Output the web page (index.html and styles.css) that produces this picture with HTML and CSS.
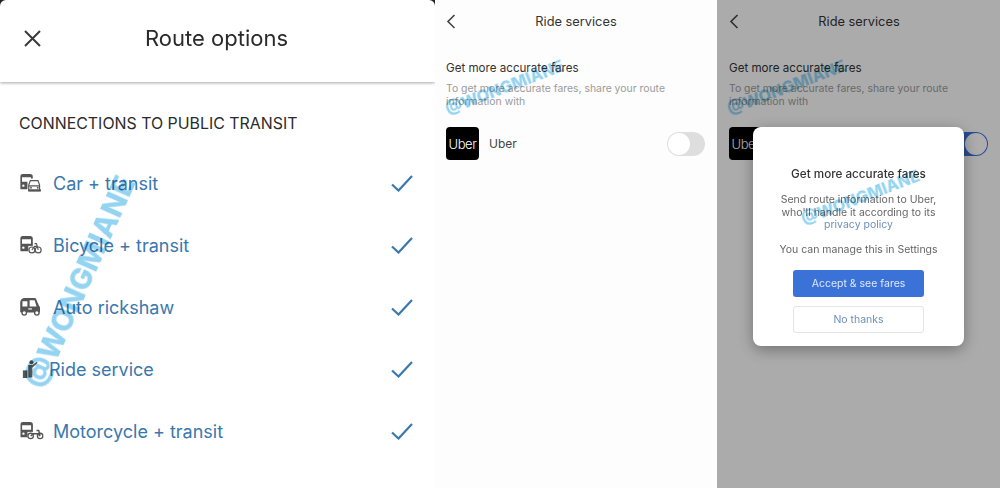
FILE: index.html
```html
<!DOCTYPE html>
<html lang="en">
<head>
	<meta charset="utf-8">
	<title>Route options</title>
	<link rel="stylesheet" href="styles.css">
</head>
<body>
	<svg class="sprite" width="0" height="0">
		<symbol id="bus" viewBox="0 0 24 20">
			<path fill="#555" d="M3 0h8a3 3 0 0 1 3 3v13a1 1 0 0 1-1 1H1a1 1 0 0 1-1-1V3a3 3 0 0 1 3-3z"/>
			<path fill="#fff" d="M2 3.500h10v5H2z"/>
			<circle fill="#fff" cx="3.500" cy="13" r="1.300"/>
		</symbol>
		<symbol id="check" viewBox="0 0 22 17">
			<path fill="none" stroke="#3a78ad" stroke-width="2.200" d="M1 9.500l6.500 6L21 1"/>
		</symbol>
	</svg>

	<main class="shots">
		<section class="route-panel">
			<div class="route-sheet">
				<header class="route-head">
					<svg class="close" viewBox="0 0 17 17"><path fill="none" stroke="#3a3a3a" stroke-width="2" d="M1 1l15 15M16 1L1 16"/></svg>
					<h1>Route options</h1>
				</header>
				<h2>CONNECTIONS TO PUBLIC TRANSIT</h2>
				<ul class="options">
					<li>
						<svg class="mode" viewBox="0 0 24 20">
							<use href="#bus" width="24" height="20"/>
							<path fill="#fff" d="M8 5h16v15H8z"/>
							<path fill="#fff" stroke="#555" stroke-width="1.300" d="M9.500 18.500v-6.500l1.800-4.700h8.400l1.800 4.700v6.500z"/>
							<path fill="#555" d="M9.500 12.500h12.500v1.300H9.500zM9 17h14v2.500H9z"/>
							<circle fill="#555" cx="12" cy="15.300" r="1"/>
							<circle fill="#555" cx="19.500" cy="15.300" r="1"/>
						</svg>
						<span>Car + transit</span>
						<svg class="tick"><use href="#check"/></svg>
					</li>
					<li>
						<svg class="mode" viewBox="0 0 24 20">
							<use href="#bus" width="24" height="20"/>
							<path fill="#fff" d="M9 11h15v9H9z"/>
							<circle fill="#fff" stroke="#555" stroke-width="1.300" cx="13" cy="15.500" r="3.300"/>
							<circle fill="#fff" stroke="#555" stroke-width="1.300" cx="20" cy="15.500" r="3.300"/>
							<path fill="none" stroke="#555" stroke-width="1.200" d="M13 15.500l3-4h3l1 4M16 8.500h2l1 3"/>
						</svg>
						<span>Bicycle + transit</span>
						<svg class="tick"><use href="#check"/></svg>
					</li>
					<li>
						<svg class="mode" viewBox="0 0 24 20">
							<path fill="#555" d="M5 0h11a2 2 0 0 1 2 2l3 7a2 2 0 0 1 1 2v4a1 1 0 0 1-1 1H1a1 1 0 0 1-1-1V5a5 5 0 0 1 5-5z"/>
							<path fill="#fff" d="M2.500 3.500h5.500v6H2.500zM10.500 2.500h5.500l2.200 7h-7.700z"/>
							<path fill="#fff" d="M9 11.500h4v1.300H9z"/>
							<circle fill="#fff" stroke="#555" stroke-width="1.500" cx="4.500" cy="16.500" r="2.500"/>
							<circle fill="#fff" stroke="#555" stroke-width="1.500" cx="18.500" cy="16.500" r="2.500"/>
						</svg>
						<span>Auto rickshaw</span>
						<svg class="tick"><use href="#check"/></svg>
					</li>
					<li class="short">
						<svg class="mode" viewBox="0 0 24 20">
							<circle fill="#555" cx="12.500" cy="2.500" r="2.300"/>
							<path fill="#555" d="M9 5.500h4.500l5-3.500 .8 1-5.800 5.500v11H9z"/>
							<path fill="#555" d="M3 11.500h5v8.500H3z"/>
						</svg>
						<span>Ride service</span>
						<svg class="tick"><use href="#check"/></svg>
					</li>
					<li>
						<svg class="mode wide" viewBox="0 0 26 20">
							<use href="#bus" width="24" height="20"/>
							<path fill="#fff" d="M8 11h18v9H8z"/>
							<circle fill="#fff" stroke="#555" stroke-width="1.400" cx="11.500" cy="15.500" r="3"/>
							<circle fill="#fff" stroke="#555" stroke-width="1.400" cx="22" cy="15.500" r="3"/>
							<path fill="none" stroke="#555" stroke-width="1.600" d="M11.500 15.500l3-2.500h5l2.500 2.500M18 9.500h2.500l1.500 6"/>
						</svg>
						<span>Motorcycle + transit</span>
						<svg class="tick"><use href="#check"/></svg>
					</li>
				</ul>
			</div>
			<div class="mark mark-big">@WONGMIANE</div>
		</section>

		<section class="ride-panel">
			<header class="ride-head">
				<svg class="back" viewBox="0 0 10 15"><path fill="none" stroke="#444" stroke-width="1.600" d="M8.500 1L2 7.500 8.500 14"/></svg>
				<h1>Ride services</h1>
			</header>
			<h2>Get more accurate fares</h2>
			<p class="hint">To get more accurate fares, share your route information with</p>
			<div class="service">
				<div class="uber">Uber</div>
				<span class="service-name">Uber</span>
				<div class="toggle"></div>
			</div>
			<div class="mark mark-small">@WONGMIANE</div>
		</section>

		<section class="ride-panel dimmed">
			<header class="ride-head">
				<svg class="back" viewBox="0 0 10 15"><path fill="none" stroke="#444" stroke-width="1.600" d="M8.500 1L2 7.500 8.500 14"/></svg>
				<h1>Ride services</h1>
			</header>
			<h2>Get more accurate fares</h2>
			<p class="hint">To get more accurate fares, share your route information with</p>
			<div class="service">
				<div class="uber">Uber</div>
				<span class="service-name">Uber</span>
				<div class="toggle on"></div>
			</div>
			<div class="mark mark-small">@WONGMIANE</div>
			<div class="overlay">
				<div class="dialog">
					<h3>Get more accurate fares</h3>
					<p>Send route information to Uber, who'll handle it according to its <a href="#">privacy policy</a></p>
					<p>You can manage this in Settings</p>
					<button class="accept">Accept &amp; see fares</button>
					<button class="decline">No thanks</button>
					<div class="mark mark-dialog">@WONGMIANE</div>
				</div>
			</div>
		</section>
	</main>
</body>
</html>
```

FILE: styles.css
```css
*
{
	box-sizing: border-box;
}
html, body
{
	margin: 0;
	height: 100%;
	overflow: hidden;
}
body
{
	font-family: Inter, Roboto, sans-serif;
	background: #fff;
}
h1, h2, h3, p, ul
{
	margin: 0;
	padding: 0;
	font-weight: 400;
}
.sprite
{
	display: block;
	position: absolute;
}
.shots
{
	display: flex;
	height: 488px;
	filter: blur(.35px);
}

/* left shot */
.route-panel
{
	position: relative;
	width: 435px;
	background: #222;
}
.route-sheet
{
	height: 100%;
	background: #fff;
	border-radius: 6px 6px 0 0;
}
.route-head
{
	display: flex;
	align-items: center;
	justify-content: center;
	position: relative;
	height: 82px;
	padding: 0 2px 6px 0;
	box-shadow: 0 1px 3px rgba(0, 0, 0, .35);
}
.route-head h1
{
	font-size: 22px;
	color: #2a2a2a;
}
.close
{
	position: absolute;
	left: 24px;
	top: 30px;
	width: 17px;
	height: 17px;
}
.route-sheet h2
{
	margin: 32px 0 0 19px;
	font-size: 15.900px;
	line-height: 19px;
	color: #2b2b2b;
}
.options
{
	list-style: none;
	margin-top: 19px;
	padding: 0 22px 0 20px;
}
.options li
{
	display: flex;
	align-items: center;
	height: 62px;
	font-size: 18px;
	color: #3a78ad;
}
.options li span
{
	flex: 1;
	margin-left: 11px;
}
.options li.short span
{
	margin-left: 7px;
}
.mode
{
	width: 22px;
	height: 18px;
}
.mode.wide
{
	width: 24px;
	margin: 0 -2px 0 0;
}
.tick
{
	width: 22px;
	height: 17px;
}

/* middle and right shots */
.ride-panel
{
	position: relative;
	width: 282px;
	padding: 0 11px;
	background: #fdfdfd;
}
.ride-panel.dimmed
{
	width: 283px;
	padding-left: 12px;
}
.ride-head
{
	display: flex;
	align-items: center;
	justify-content: center;
	position: relative;
	height: 42px;
}
.ride-head h1
{
	font-size: 12.800px;
	color: #333;
}
.back
{
	position: absolute;
	left: 0;
	top: 14px;
	width: 10px;
	height: 15px;
}
.ride-panel h2
{
	margin-top: 18px;
	font-size: 11.600px;
	line-height: 16px;
	color: #333;
}
.hint
{
	margin-top: 6px;
	width: 240px;
	font-size: 10.400px;
	line-height: 13px;
	color: #9b9b9b;
}
.service
{
	display: flex;
	align-items: center;
	margin-top: 19px;
}
.uber
{
	display: flex;
	align-items: center;
	justify-content: center;
	width: 33px;
	height: 33px;
	background: #000;
	border-radius: 4px;
	font-size: 13px;
	font-weight: 300;
	letter-spacing: -.4px;
	color: #fff;
}
.service-name
{
	flex: 1;
	margin-left: 10px;
	font-size: 12px;
	color: #444;
}
.toggle
{
	position: relative;
	width: 38px;
	height: 24px;
	margin-right: 1px;
	background: #dedede;
	border-radius: 12px;
}
.toggle:after
{
	content: "";
	position: absolute;
	left: 1px;
	top: 1px;
	width: 22px;
	height: 22px;
	background: #fff;
	border-radius: 50%;
}
.toggle.on
{
	background: #3a72d8;
}
.toggle.on:after
{
	left: 15px;
}

/* dialog */
.overlay
{
	display: flex;
	align-items: center;
	justify-content: center;
	position: absolute;
	top: 0;
	left: 0;
	right: 0;
	bottom: 0;
	padding-bottom: 15px;
	background: rgba(0, 0, 0, .32);
}
.dialog
{
	position: relative;
	display: flex;
	flex-direction: column;
	align-items: center;
	width: 211px;
	height: 219px;
	padding-top: 39px;
	background: #fff;
	border-radius: 8px;
	box-shadow: 0 4px 16px rgba(0, 0, 0, .35);
	text-align: center;
}
.dialog h3
{
	font-size: 11.700px;
	line-height: 16px;
	font-weight: 500;
	color: #333;
}
.dialog p
{
	margin-top: 12px;
	padding: 0 22px;
	font-size: 10.500px;
	line-height: 12.500px;
	color: #666;
}
.dialog p + p
{
	margin-top: 12px;
	padding: 0;
}
.dialog a
{
	display: block;
	color: #6d90bb;
	text-decoration: none;
}
.dialog button
{
	width: 131px;
	height: 27px;
	border-radius: 3px;
	font-family: inherit;
	font-size: 10.500px;
}
.accept
{
	margin-top: 14px;
	border: 0;
	background: #3a72d8;
	color: #dfe8f8;
}
.decline
{
	margin-top: 9px;
	border: 1px solid #e4e4e4;
	background: #fff;
	color: #6d90bb;
}

/* watermarks */
.mark
{
	position: absolute;
	white-space: nowrap;
	font-weight: 800;
	color: #95d4f1;
	mix-blend-mode: multiply;
	transform-origin: 0 100%;
}
.mark-big
{
	left: 47px;
	top: 362px;
	font-size: 29.500px;
	line-height: 30px;
	transform: rotate(-66deg);
}
.mark-small
{
	left: 14px;
	top: 101px;
	font-size: 16.200px;
	line-height: 16px;
	transform: rotate(-21deg);
}
.dialog .mark-dialog
{
	left: 52px;
	top: 84px;
	font-size: 16.200px;
	line-height: 16px;
	transform: rotate(-21deg);
}
```
